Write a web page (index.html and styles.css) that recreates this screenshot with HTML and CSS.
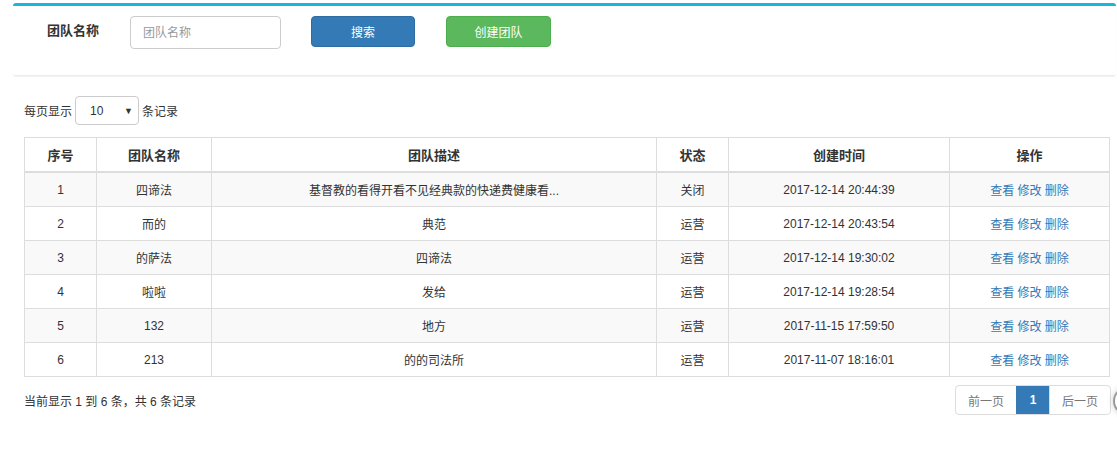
FILE: index.html
```html
<!DOCTYPE html>
<html lang="zh">
<head>
<meta charset="utf-8">
<title>团队管理</title>
<link rel="stylesheet" href="styles.css">
</head>
<body>
<div class="panel">
  <span class="panel-label">团队名称</span>
  <input class="panel-input" type="text" placeholder="团队名称">
  <button class="btn btn-primary">搜索</button>
  <button class="btn btn-success">创建团队</button>
</div>

<div class="content">
  <div class="length">
    <span>每页显示</span>
    <div class="select"><span class="select-val">10</span><span class="select-arrow">▼</span></div>
    <span>条记录</span>
  </div>

  <table class="grid">
    <colgroup>
      <col class="c1"><col class="c2"><col class="c3"><col class="c4"><col class="c5"><col class="c6">
    </colgroup>
    <thead>
      <tr><th>序号</th><th>团队名称</th><th>团队描述</th><th>状态</th><th>创建时间</th><th>操作</th></tr>
    </thead>
    <tbody>
      <tr><td>1</td><td>四谛法</td><td>基督教的看得开看不见经典款的快递费健康看...</td><td>关闭</td><td>2017-12-14 20:44:39</td><td class="ops"><a>查看</a> <a>修改</a> <a>删除</a></td></tr>
      <tr><td>2</td><td>而的</td><td>典范</td><td>运营</td><td>2017-12-14 20:43:54</td><td class="ops"><a>查看</a> <a>修改</a> <a>删除</a></td></tr>
      <tr><td>3</td><td>的萨法</td><td>四谛法</td><td>运营</td><td>2017-12-14 19:30:02</td><td class="ops"><a>查看</a> <a>修改</a> <a>删除</a></td></tr>
      <tr><td>4</td><td>啦啦</td><td>发给</td><td>运营</td><td>2017-12-14 19:28:54</td><td class="ops"><a>查看</a> <a>修改</a> <a>删除</a></td></tr>
      <tr><td>5</td><td>132</td><td>地方</td><td>运营</td><td>2017-11-15 17:59:50</td><td class="ops"><a>查看</a> <a>修改</a> <a>删除</a></td></tr>
      <tr><td>6</td><td>213</td><td>的的司法所</td><td>运营</td><td>2017-11-07 18:16:01</td><td class="ops"><a>查看</a> <a>修改</a> <a>删除</a></td></tr>
    </tbody>
  </table>

  <div class="footer">
    <span class="info">当前显示 1 到 6 条，共 6 条记录</span>
    <div class="pager">
      <span class="pg">前一页</span>
      <span class="pg pg-active">1</span>
      <span class="pg">后一页</span>
    </div>
  </div>
</div>
<div class="totop"></div>
</body>
</html>
```
FILE: styles.css
```css
html, body {
  margin: 0;
  padding: 0;
  background: #fff;
  font-family: "Liberation Sans", "Noto Sans CJK SC", sans-serif;
  font-size: 12px;
  color: #333;
  overflow: hidden;
}

.panel {
  margin: 3px 1px 0 13px;
  border-top: 3px solid #17b7dc;
  border-radius: 3px;
  box-shadow: 0 1px 1px rgba(0, 0, 0, 0.06);
  border-bottom: 1px solid #ececec;
  display: flex;
  align-items: flex-start;
  padding-left: 34px;
  padding-top: 10px;
  box-sizing: border-box;
  height: 73px;
}

.panel-label {
  font-weight: bold;
  font-size: 13px;
  color: #333;
  width: 52px;
  margin-right: 31px;
  line-height: 33px;
  margin-top: -2px;
}

.panel-input {
  width: 151px;
  height: 33px;
  box-sizing: border-box;
  border: 1px solid #ccc;
  border-radius: 4px;
  padding: 0 12px;
  font-family: inherit;
  font-size: 12px;
  color: #555;
  margin: 0 30px 0 0;
  outline: none;
}
.panel-input::placeholder { color: #999; }

.btn {
  height: 31px;
  border-radius: 4px;
  border: 1px solid transparent;
  color: #fff;
  font-family: inherit;
  font-size: 12px;
  padding: 0;
  cursor: pointer;
}
.btn-primary {
  width: 104px;
  background: #337ab7;
  border-color: #2e6da4;
  margin-right: 31px;
}
.btn-success {
  width: 105px;
  background: #5cb85c;
  border-color: #4cae4c;
}

.content {
  padding: 20px 8px 0 24px;
}

.length {
  display: flex;
  align-items: center;
  height: 29px;
  color: #333;
}
.select {
  width: 64px;
  height: 29px;
  box-sizing: border-box;
  border: 1px solid #ccc;
  border-radius: 4px;
  margin: 0 3px 0 3px;
  display: flex;
  align-items: center;
  justify-content: space-between;
  padding: 0 5px 0 14px;
  font-size: 12px;
}
.select-arrow {
  font-size: 9px;
  color: #333;
}

.grid {
  margin-top: 12px;
  width: 1085px;
  border-collapse: collapse;
  border: 1px solid #ddd;
  table-layout: fixed;
}
.c1 { width: 72px; }
.c2 { width: 115px; }
.c3 { width: 445px; }
.c4 { width: 72px; }
.c5 { width: 221px; }
.c6 { width: 160px; }

.grid th, .grid td {
  border: 1px solid #ddd;
  text-align: center;
  padding: 0 8px;
  white-space: nowrap;
  overflow: hidden;
}
.grid th {
  height: 33px;
  font-size: 13px;
  font-weight: bold;
  color: #333;
  border-bottom: 2px solid #ddd;
}
.grid td {
  height: 33px;
  font-size: 12px;
  color: #333;
}
.grid tbody tr:nth-child(odd) td {
  background: #f9f9f9;
}
.ops a {
  color: #337ab7;
  text-decoration: none;
}

.footer {
  display: flex;
  justify-content: space-between;
  align-items: center;
  margin-top: 8px;
  width: 1087px;
}
.info {
  color: #333;
  font-size: 12px;
}
.pager {
  display: flex;
  height: 30px;
  border: 1px solid #ddd;
  border-radius: 4px;
  box-sizing: border-box;
  overflow: hidden;
}
.pg {
  display: flex;
  align-items: center;
  justify-content: center;
  width: 60px;
  color: #777;
  font-size: 12px;
  border-left: 1px solid #ddd;
}
.pg:first-child { border-left: none; }
.pg-active {
  width: 32px;
  background: #337ab7;
  color: #fff;
  font-weight: bold;
  border-left-color: #337ab7;
}

.totop {
  position: fixed;
  left: 1113px;
  top: 386px;
  width: 28px;
  height: 26px;
  border-radius: 50%;
  border: 2px solid #999;
  background: #fff;
  box-shadow: 0 0 6px rgba(0, 0, 0, 0.2);
}
```
